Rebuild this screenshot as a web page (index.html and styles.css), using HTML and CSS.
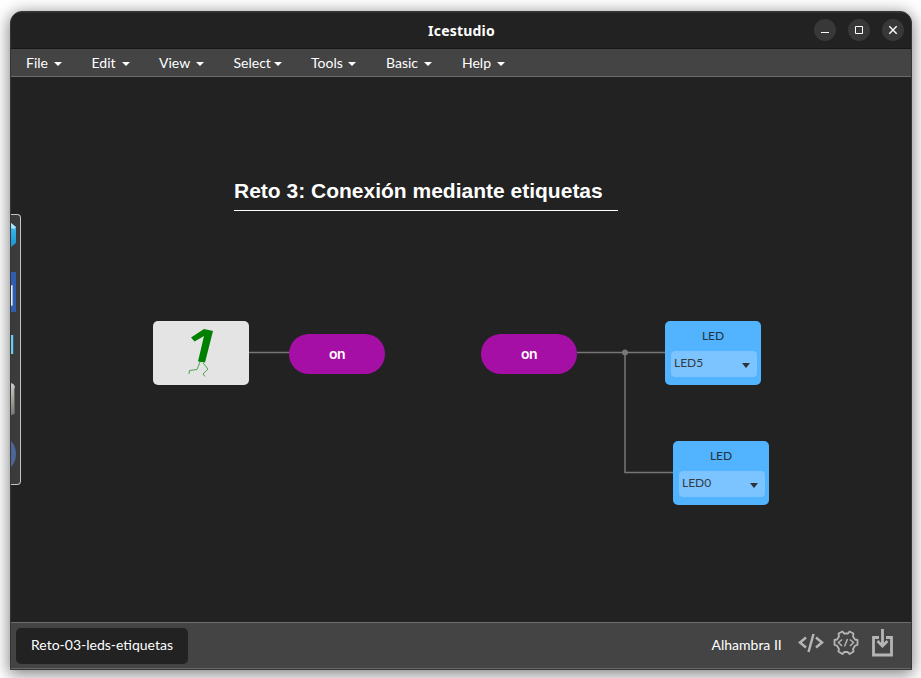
FILE: index.html
```html
<!DOCTYPE html>
<html lang="es">
<head>
<meta charset="utf-8">
<title>Icestudio</title>
<link rel="stylesheet" href="styles.css">
</head>
<body>
<div class="window">
  <header class="titlebar">
    <div class="title">Icestudio</div>
    <div class="controls">
      <span class="control"><svg width="22" height="22" viewBox="0 0 22 22"><path d="M7 13.500h8"/></svg></span>
      <span class="control"><svg width="22" height="22" viewBox="0 0 22 22"><path d="M7.500 7.500h7v7h-7z"/></svg></span>
      <span class="control"><svg width="22" height="22" viewBox="0 0 22 22"><path d="M7.300 7.300l7.400 7.400M14.700 7.300l-7.400 7.400" stroke-width="1.400"/></svg></span>
    </div>
  </header>
  <nav class="menu">
    <span class="item file">File<i class="caret"></i></span>
    <span class="item edit">Edit<i class="caret"></i></span>
    <span class="item view">View<i class="caret"></i></span>
    <span class="item select">Select<i class="caret"></i></span>
    <span class="item tools">Tools<i class="caret"></i></span>
    <span class="item basic">Basic<i class="caret"></i></span>
    <span class="item help">Help<i class="caret"></i></span>
  </nav>
  <main class="canvas">
    <aside class="drawer">
      <svg width="9" height="269" viewBox="0 0 9 269">
        <defs>
          <linearGradient id="cube" x1="0" y1="0" x2="0" y2="1"><stop offset="0" stop-color="#48bdea"/><stop offset="1" stop-color="#1494d5"/></linearGradient>
          <linearGradient id="metal" x1="0" y1="0" x2="0" y2="1"><stop offset="0" stop-color="#c9cbc8"/><stop offset="1" stop-color="#777a73"/></linearGradient>
        </defs>
        <path d="M0 8l5 4v16l-5 4z" fill="url(#cube)"/>
        <path d="M0 8l5 4-2 2-3-1z" fill="#a6e3fa"/>
        <path d="M0 57h5v40H0z" fill="#315db0"/>
        <path d="M0 70h1.500v20H0z" fill="#e5eaf4"/>
        <path d="M0 70.500h1.500v20H0" fill="none" stroke="#9eb5dd"/>
        <path d="M0 120h2v19H0z" fill="#70cce8"/>
        <path d="M2.500 120v19" stroke="#24647a"/>
        <path d="M0 168q4 1 4 5v23q0 4-4 4z" fill="url(#metal)"/>
        <path d="M3.500 173v24" stroke="#656761"/>
        <path d="M0 226q5 5 5 13t-5 13z" fill="#4b6799"/>
      </svg>
    </aside>
    <svg class="wires" width="900" height="545" viewBox="0 0 900 545">
      <path d="M238 275.500h41M566 275.500h88M614 275.500v120h49" />
      <circle cx="614" cy="275.500" r="3"/>
    </svg>
    <h1 class="heading">Reto 3: Conexión mediante etiquetas</h1>
    <div class="node constant">
      <svg width="96" height="64" viewBox="0 0 96 64">
        <path d="M51 8l9 2-8 31.500-7-1L51 15l-9.500 5.500-3.500-4z" fill="#008000"/>
        <path d="M47 41l-3 7.500-7.500 1-.5 3.500M50 42l5 6-5 5 2 2.500" fill="none" stroke="#4ca34c" stroke-width="1"/>
      </svg>
    </div>
    <div class="node label input">on</div>
    <div class="node label output">on</div>
    <div class="node led led-five"><span>LED</span><div class="picker">LED5<i></i></div></div>
    <div class="node led led-zero"><span>LED</span><div class="picker">LED0<i></i></div></div>
  </main>
  <footer class="status">
    <div class="tab">Reto-03-leds-etiquetas</div>
    <div class="board">Alhambra II</div>
    <svg class="code" width="26" height="20" viewBox="0 0 26 20"><path d="M8 4.500L2 9.500l6 5M18 4.500l6 5-6 5M15.500 1l-5 18"/></svg>
    <svg class="gear" width="26" height="26" viewBox="0 0 26 26"><path d="M9.500 1.500L11 3.500h4l1.500-2 4 2-.5 3 2 3 2.500.5v5l-2.500.7-2 3.300.6 2.500-4 2.500-2-2h-3.200l-2 2-4-2.500L6 19l-2-3.300L1.500 15v-5L4 9.500l2-3-.5-3z" stroke-linejoin="round"/><path d="M9 9.500L5.500 12.500l3.500 3.500M17 9.500l3.500 3-3.500 3.500M14.500 9l-3 7.500" stroke-width="1.500"/></svg>
    <svg class="upload" width="22" height="28" viewBox="0 0 22 28"><path d="M7 8.500H1.500V26h18V8.500H14M10.500 0v17M5.500 12l5 5 5-5"/></svg>
  </footer>
</div>
</body>
</html>
```
FILE: styles.css
```css
* { box-sizing: border-box; }
body {
  margin: 0;
  height: 678px;
  padding: 11px 9px 8px 10px;
  overflow: hidden;
  background: #fff;
  color: #fff;
  font-family: Lato, sans-serif;
  font-size: 14px;
}
.window {
  display: flex;
  flex-direction: column;
  width: 902px;
  height: 659px;
  border: 1px solid #343636;
  border-radius: 12px 12px 0 0;
  overflow: hidden;
  background: #222;
  box-shadow: 0 3px 16px 1px rgba(0, 0, 0, .5);
}
.titlebar {
  display: grid;
  grid-template-columns: 1fr auto 1fr;
  flex: none;
  height: 37px;
  padding: 0 7px 0 8px;
  border-top: 1px solid #303030;
  border-bottom: 1px solid #171717;
}
.title {
  grid-column: 2;
  font: bold 14px/35px "Noto Sans", sans-serif;
  letter-spacing: .2px;
}
.controls {
  display: flex;
  justify-content: flex-end;
  gap: 12px;
  padding-top: 6px;
}
.control {
  width: 22px;
  height: 22px;
  border-radius: 50%;
  background: #383838;
}
.control svg { display: block; fill: none; stroke: #fff; }
.menu {
  display: flex;
  flex: none;
  height: 28px;
  padding-left: 15px;
  border-bottom: 1px solid #6d6d6d;
  background: #444;
  line-height: 27px;
}
.item { display: flex; justify-content: space-between; align-items: center; }
.file { width: 36px; margin-right: 29.5px; }
.edit { width: 38px; margin-right: 29.5px; }
.view { width: 45px; margin-right: 29.5px; }
.select { width: 48px; margin-right: 29.5px; }
.tools { width: 45px; margin-right: 30px; }
.basic { width: 46px; margin-right: 30px; }
.help { width: 43px; }
.caret {
  margin-top: 2px;
  border: 4px solid transparent;
  border-top-color: #fff;
  border-bottom: 0;
}
.canvas { position: relative; flex: none; height: 545px; }
.drawer {
  position: absolute;
  top: 137px;
  left: 0;
  width: 10px;
  height: 271px;
  border: 1px solid #c4c4c4;
  border-left: 0;
  border-radius: 0 4px 4px 0;
  background: #3b3b3b;
}
.drawer svg { display: block; }
.wires { position: absolute; top: 0; left: 0; fill: none; stroke: #777; stroke-width: 1.5; }
.wires circle { fill: #777; stroke: none; }
.heading {
  position: absolute;
  top: 100px;
  left: 223px;
  width: 384px;
  height: 34px;
  margin: 0;
  border-bottom: 1px solid #fff;
  font: bold 21px/28px "Liberation Sans", sans-serif;
  white-space: nowrap;
}
.node { position: absolute; width: 96px; height: 64px; border-radius: 5px; }
.constant { left: 142px; top: 244px; background: #e4e4e4; }
.label {
  height: 40px;
  border-radius: 20px;
  background: #a60fa6;
  font: 600 14px/40px Inter, sans-serif;
  letter-spacing: -.6px;
  text-align: center;
}
.input { left: 278px; top: 257px; }
.output { left: 470px; top: 257px; }
.led {
  padding: 7px 4px 0 6px;
  background: #52b3ff;
  color: #24333d;
  font-size: 12px;
  line-height: 16px;
  text-align: center;
}
.led-five { left: 654px; top: 244px; }
.led-zero { left: 662px; top: 364px; }
.led span { display: block; margin-right: 2px; }
.picker {
  display: flex;
  justify-content: space-between;
  height: 26px;
  margin-top: 7px;
  padding: 0 7px 0 3px;
  border-radius: 4px;
  background: #7bc4ff;
  color: #333c42;
  line-height: 24px;
}
.picker i {
  margin-top: 12px;
  height: 5px;
  border: 4px solid transparent;
  border-top: 5px solid #2b3338;
  border-bottom: 0;
}
.status {
  display: flex;
  align-items: flex-start;
  flex: none;
  height: 47px;
  padding-left: 5px;
  border-top: 1px solid #6d6d6d;
  border-bottom: 1px solid #686868;
  background: #444;
}
.status svg { flex: none; fill: none; stroke: #b5b5b5; }
.tab {
  width: 172px;
  height: 36px;
  margin-top: 5px;
  border-radius: 5px;
  background: #222;
  line-height: 34px;
  text-align: center;
}
.board { width: 71px; margin: 5px 15.5px 0 523.5px; line-height: 34px; white-space: nowrap; }
.code { margin-top: 10px; stroke-width: 2.5; }
.gear { margin: 7px 0 0 9px; stroke-width: 1.8; }
.upload { margin: 6px 0 0 13px; stroke-width: 2.8; }
```
